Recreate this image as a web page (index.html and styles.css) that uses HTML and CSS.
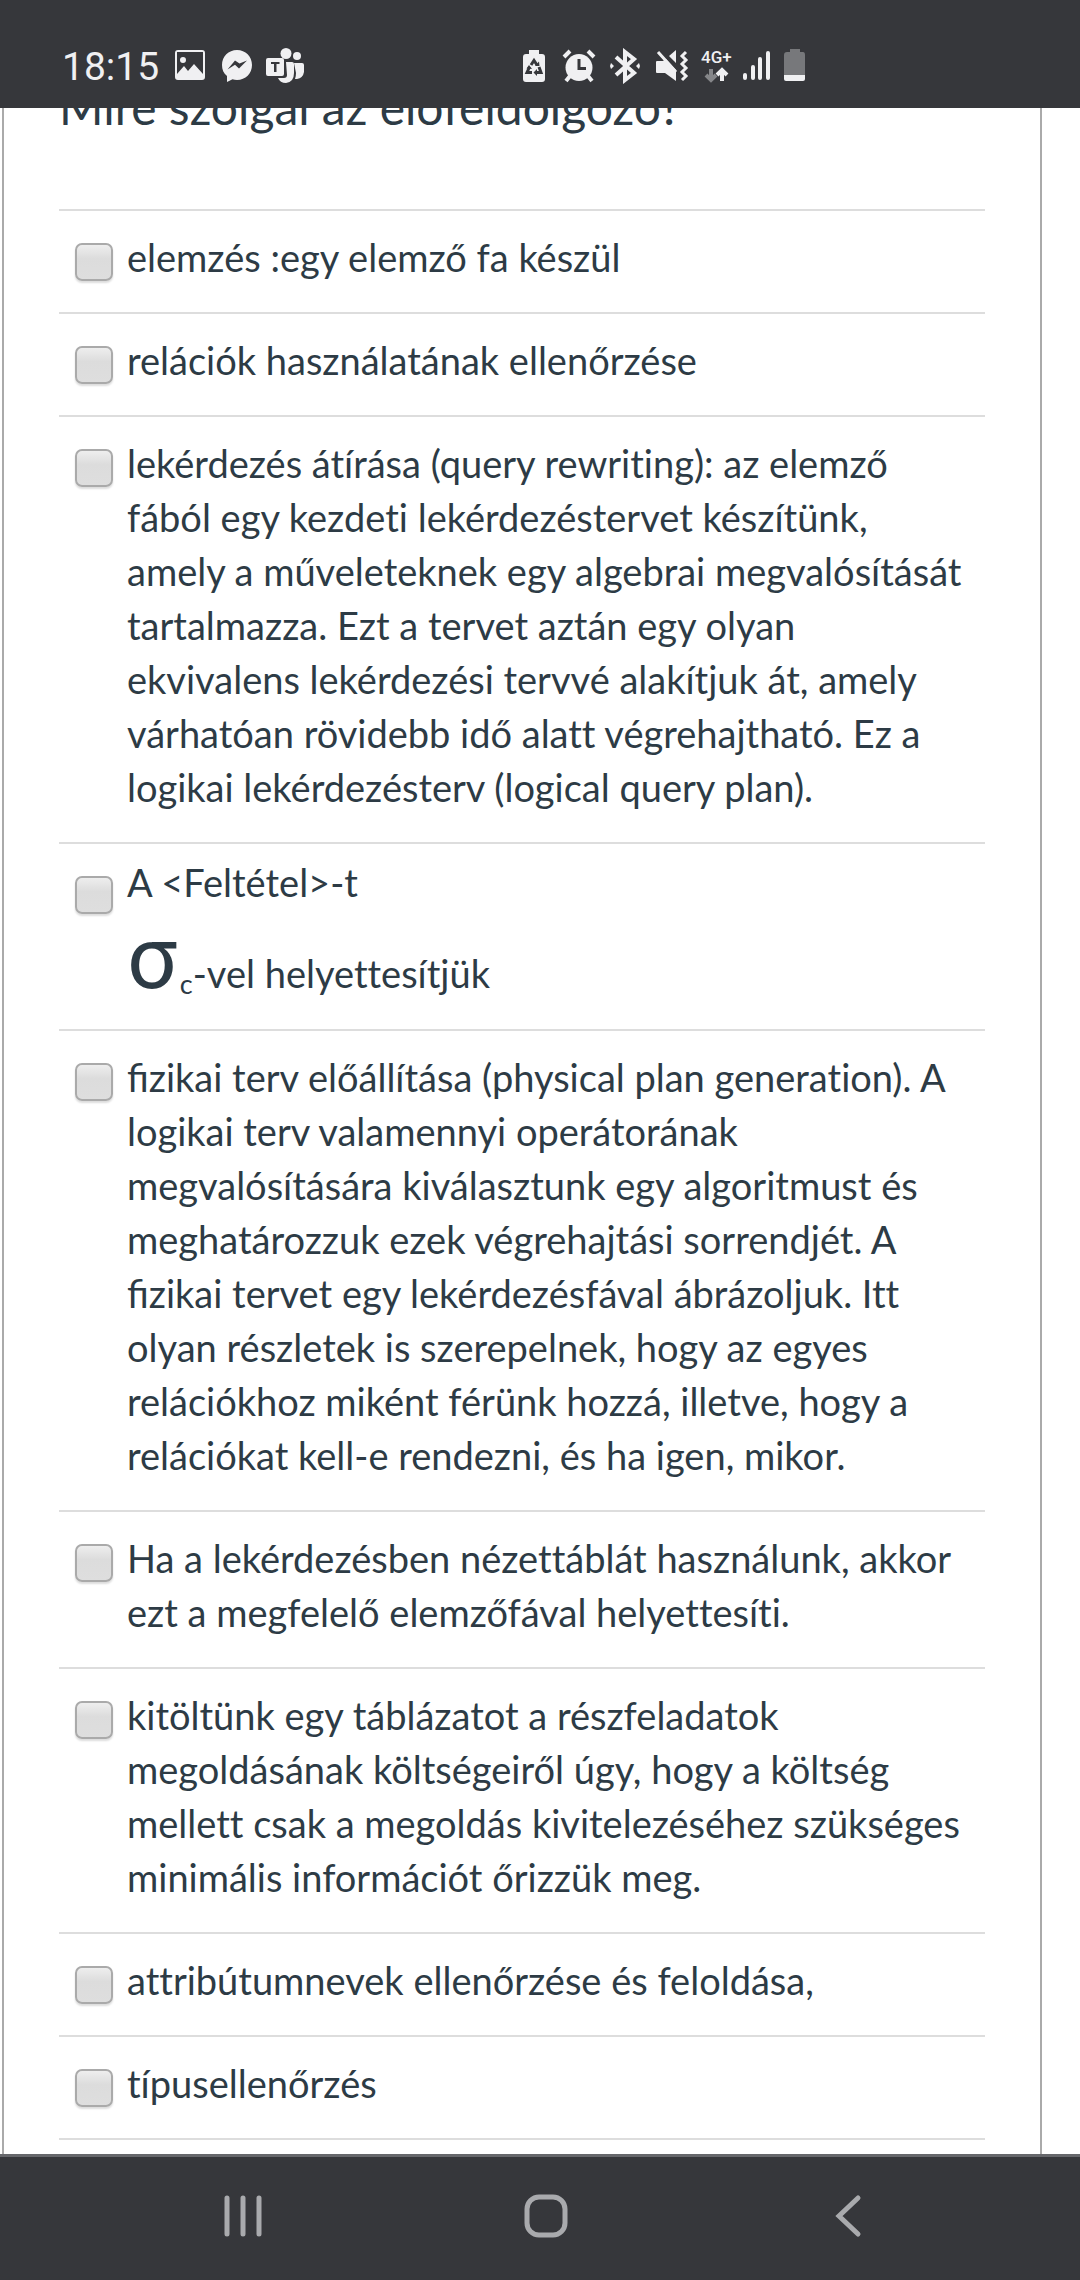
FILE: index.html
```html
<!DOCTYPE html>
<html lang="hu">
<head>
<meta charset="utf-8">
<meta name="viewport" content="width=device-width, initial-scale=1">
<title>Kvíz</title>
<link rel="stylesheet" href="styles.css">
</head>
<body>
<header class="status">
  <div class="status-left">
    <time class="clock">18:15</time>
    <svg class="icon" width="33" height="36" viewBox="0 0 33 36" aria-hidden="true">
      <path fill-rule="evenodd" d="M4 2H28Q31 2 31 5V29Q31 32 28 32H4Q1 32 1 29V5Q1 2 4 2ZM3 4V26L10 18L14 23L20 16L29 26V4ZM9 9a3 3 0 1 1 0 6a3 3 0 1 1 0-6Z"/>
    </svg>
    <svg class="icon" width="31" height="36" viewBox="0 0 31 36" aria-hidden="true">
      <path fill-rule="evenodd" d="M16 2C24.500 2 31 8.500 31 17S24.500 32 16 32Q13.500 32 11.500 31.300L6 34V28C2.500 25.500 1 21.500 1 17C1 8.500 7.500 2 16 2ZM6.500 21.500L14 16.700L18 20.500L26 12.500L18.500 15.500L14 12.500Z"/>
    </svg>
    <svg class="icon" width="38" height="36" viewBox="0 0 38 36" aria-hidden="true">
      <circle cx="20" cy="5.500" r="5.500"/><circle cx="31" cy="8" r="4"/>
      <path d="M28 15H36Q38 15 38 17V24Q37 30 31 31H29Q30 28 30 25Z"/>
      <path d="M20 14H26Q28 14 28 16V25Q28 34 20 35Q14 35 12 30H18Q21 30 21 27Z"/>
      <path fill-rule="evenodd" d="M2 10H16Q18 10 18 12V26Q18 28 16 28H2Q0 28 0 26V12Q0 10 2 10ZM5 14V16H8V24H10.500V16H13.500V14Z"/>
    </svg>
  </div>
  <div class="status-right">
    <svg class="icon" width="29" height="36" viewBox="0 0 29 36" aria-hidden="true">
      <path d="M7 2H17V6H20Q23 6 23 9V31Q23 34 20 34H4Q1 34 1 31V9Q1 6 4 6H7Z"/>
      <path class="cut" d="M9 17L12 12.500L15 17M17 19L19 24.500H14M10 24.500H5L7.500 19"/>
      <path class="cut-fill" d="M13 18L17.500 18L17 13.500ZM15 21V28L11.500 24.500ZM4.500 20.500L7 17L10 21Z"/>
    </svg>
    <svg class="icon" width="39" height="36" viewBox="0 0 39 36" aria-hidden="true">
      <circle cx="18" cy="19.500" r="13.500"/>
      <path class="line" d="M3 9L9 3M33 9L27 3M9 28L5 33M27 28L31 33"/>
      <path class="cut" d="M18 11V20.500H25"/>
    </svg>
    <svg class="icon" width="35" height="36" viewBox="0 0 35 36" aria-hidden="true">
      <path class="line" d="M6 9L24 25L15 32V4L24 11L6 27"/>
      <path d="M1 15L4 18L1 21L0 18ZM29 15L30 18L29 21L26 18Z"/>
    </svg>
    <svg class="icon" width="36" height="36" viewBox="0 0 36 36" aria-hidden="true">
      <path d="M2 13H8L11 11L21 22V33L10 25H2Q1 25 1 24V14Q1 13 2 13ZM14 8L21 2V15Z"/>
      <path class="line thin" d="M3 4L21 24M31 4L27 8L31 12L27 16L31 20L27 24L31 28L27 32"/>
    </svg>
    <svg class="icon" width="31" height="36" viewBox="0 0 31 36" aria-hidden="true">
      <text class="net" x="0" y="15">4G+</text>
      <path class="line dim" d="M10 21V31M5 27L10 32L15 27"/>
      <path class="line" d="M21 33V22M16 27L21 22L26 27"/>
    </svg>
    <svg class="icon" width="32" height="36" viewBox="0 0 32 36" aria-hidden="true">
      <path class="line rounded" d="M3 27V30M11 19V30M18 11V30M26 5V30"/>
    </svg>
    <svg class="icon" width="22" height="36" viewBox="0 0 22 36" aria-hidden="true">
      <path class="dim-fill" d="M6 1H16V4H19Q21 4 21 7V28H0V7Q0 4 3 4H6Z"/>
      <path d="M0 27H21V31Q21 33 19 33H2Q0 33 0 31Z"/>
    </svg>
  </div>
</header>
<main class="viewport">
  <form class="frame">
    <fieldset class="question">
      <legend class="prompt">Mire szolgál az előfeldolgozó?</legend>
      <label class="answer"><input type="checkbox" class="tick"><span class="text">elemzés :egy elemző fa készül</span></label>
      <label class="answer"><input type="checkbox" class="tick"><span class="text">relációk használatának ellenőrzése</span></label>
      <label class="answer"><input type="checkbox" class="tick"><span class="text">lekérdezés átírása (query rewriting): az elemző fából egy kezdeti lekérdezéstervet készítünk, amely a műveleteknek egy algebrai megvalósítását tartalmazza. Ezt a tervet aztán egy olyan ekvivalens lekérdezési tervvé alakítjuk át, amely várhatóan rövidebb idő alatt végrehajtható. Ez a logikai lekérdezésterv (logical query plan).</span></label>
      <label class="answer formula"><input type="checkbox" class="tick"><span class="text">A &lt;Feltétel&gt;-t<span class="expr"><span class="sigma">σ</span><sub class="sub">c</sub>-vel helyettesítjük</span></span></label>
      <label class="answer"><input type="checkbox" class="tick"><span class="text"><span class="joined">fi</span>zikai terv előállítása (physical plan generation). A logikai terv valamennyi operátorának megvalósítására kiválasztunk egy algoritmust és meghatározzuk ezek végrehajtási sorrendjét. A <span class="joined">fi</span>zikai tervet egy lekérdezésfával ábrázoljuk. Itt olyan részletek is szerepelnek, hogy az egyes relációkhoz miként férünk hozzá, illetve, hogy a relációkat kell-e rendezni, és ha igen, mikor.</span></label>
      <label class="answer"><input type="checkbox" class="tick"><span class="text">Ha a lekérdezésben nézettáblát használunk, akkor ezt a megfelelő elemzőfával helyettesíti.</span></label>
      <label class="answer"><input type="checkbox" class="tick"><span class="text">kitöltünk egy táblázatot a részfeladatok megoldásának költségeiről úgy, hogy a költség mellett csak a megoldás kivitelezéséhez szükséges minimális információt őrizzük meg.</span></label>
      <label class="answer"><input type="checkbox" class="tick"><span class="text">attribútumnevek ellenőrzése és feloldása,</span></label>
      <label class="answer"><input type="checkbox" class="tick"><span class="text">típusellenőrzés</span></label>
    </fieldset>
  </form>
</main>
<nav class="navbar">
  <button class="key" type="button" aria-label="Legutóbbiak">
    <svg width="44" height="44" viewBox="0 0 44 44"><path d="M6 4V40M22 4V40M38 4V40"/></svg>
  </button>
  <button class="key" type="button" aria-label="Kezdőképernyő">
    <svg width="44" height="44" viewBox="0 0 44 44"><rect x="3" y="3" width="38" height="38" rx="12"/></svg>
  </button>
  <button class="key" type="button" aria-label="Vissza">
    <svg width="44" height="44" viewBox="0 0 44 44"><path d="M32 4L13 22L32 40"/></svg>
  </button>
</nav>
</body>
</html>
```

FILE: styles.css
```css
* { box-sizing: border-box; }

body {
  margin: 0;
  height: 100vh;
  display: flex;
  flex-direction: column;
  background: #fff;
  color: #2d3b45;
  font-family: Lato, "Noto Sans", sans-serif;
  font-size: 38px;
  line-height: 54px;
}

.status {
  flex: none;
  display: flex;
  height: 108px;
  padding: 48px 0 0 62px;
  background: #36373b;
  color: #f0f0f2;
}

.status-left,
.status-right {
  display: flex;
  align-items: flex-start;
  gap: 14px;
}

.status-left { width: 460px; }

.status-right { gap: 10px; }

.clock {
  width: 98px;
  font-family: Roboto, sans-serif;
  font-size: 39px;
  line-height: 38px;
  white-space: nowrap;
}

.icon { flex: none; fill: #f0f0f2; }

.line {
  fill: none;
  stroke: #f0f0f2;
  stroke-width: 4;
}

.thin { stroke-width: 3; }
.rounded { stroke-linecap: round; }
.dim { stroke: #858689; }
.dim-fill { fill: #77787b; }
.cut { fill: none; stroke: #36373b; stroke-width: 3; }
.cut-fill { fill: #36373b; }
.net { font: 500 17px Roboto, sans-serif; }

.viewport {
  flex: 1;
  min-height: 0;
  overflow: hidden;
}

.frame {
  display: flow-root;
  min-height: 100%;
  margin: 0 38px 0 2px;
  padding: 0 55px;
  border: solid #aaa;
  border-width: 0 2px;
}

/* The page is scrolled so that the prompt runs under the status bar. */
.question {
  min-width: 0;
  margin: -28px 0 0;
  padding: 0;
  border: 0;
  border-bottom: 2px solid #ddd;
}

.prompt {
  padding: 0 0 75px;
  font-size: 48px;
  font-variant-ligatures: none;
}

.answer {
  display: flex;
  align-items: flex-start;
  gap: 14px;
  padding: 19px 16px 28px;
  border-top: 2px solid #ddd;
}

.tick {
  flex: none;
  appearance: none;
  width: 38px;
  height: 38px;
  margin: 13px 0 0;
  border: 2px solid #aaa;
  border-radius: 7px;
  background: linear-gradient(#eee, #dcdcdc 40%, #dedede);
  box-shadow: 0 2px 2px #ddd;
}

.text { flex: 1; font-variant-ligatures: none; }
.joined { font-variant-ligatures: normal; }

.formula { padding-top: 11px; padding-bottom: 12px; }
.formula .tick { margin-top: 21px; }

.expr { display: block; margin-top: 20px; line-height: 88px; }

.sigma {
  margin-right: 3px;
  font-family: Roboto, sans-serif;
  font-size: 88px;
  line-height: 54px;
}

.sub {
  font-size: 27px;
  line-height: 0;
  vertical-align: -6px;
}

.navbar {
  flex: none;
  display: flex;
  justify-content: center;
  gap: 3px;
  height: 126px;
  padding: 0 0 6px 11px;
  border-top: 3px solid #66676b;
  background: #36373b;
}

.key {
  width: 28%;
  padding: 0;
  border: 0;
  background: none;
}

.key svg {
  display: block;
  margin: 0 auto;
  fill: none;
  stroke: #a9aaad;
  stroke-width: 5;
  stroke-linecap: round;
}
```
